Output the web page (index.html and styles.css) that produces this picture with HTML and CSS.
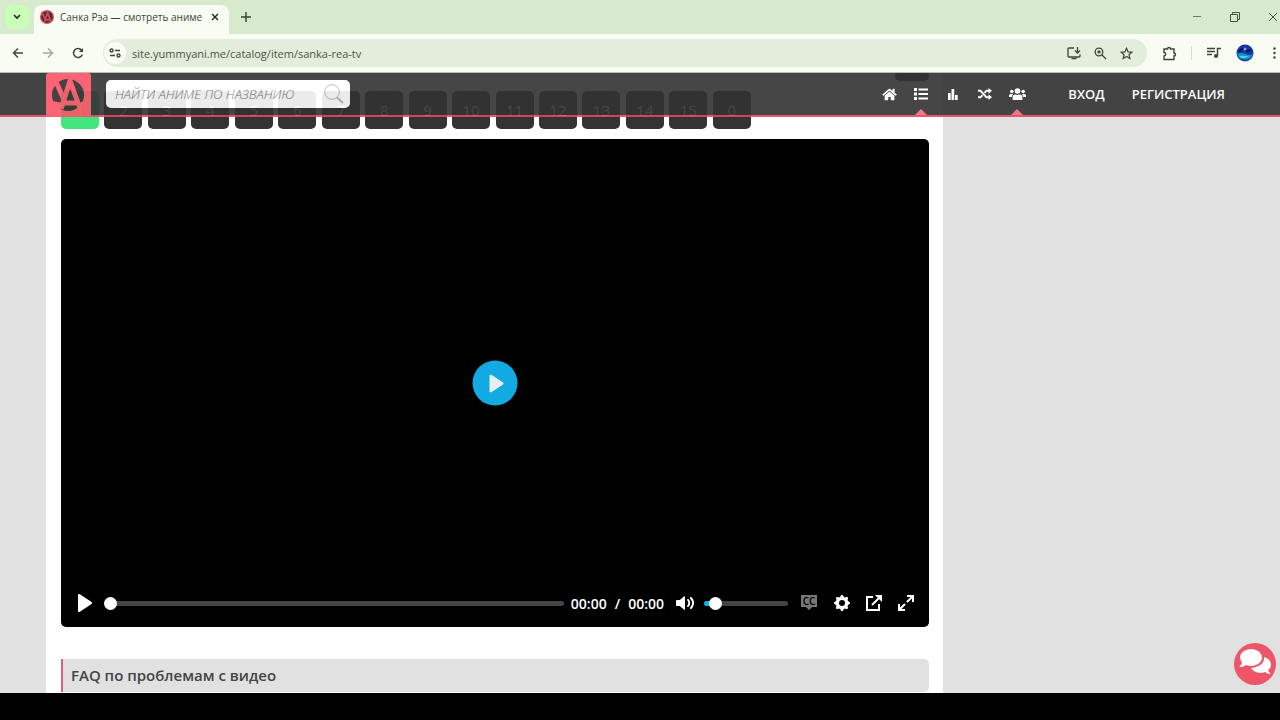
FILE: index.html
```html
<!DOCTYPE html>
<html lang="ru">
<head>
  <meta charset="UTF-8" />
  <meta name="viewport" content="width=device-width, initial-scale=1.0"/>
  <title>Санка Рэа — смотреть аниме</title>
  <link rel="stylesheet" href="styles.css">
</head>
<body>

  <!-- Browser window -->
  <div class="tab-strip">
    <button class="tab-search" aria-label="Search tabs">
      <svg width="8" height="6" viewBox="0 0 8 6"><path d="M1 1l3 3 3-3" fill="none" stroke="#1c2b16" stroke-width="1.6"/></svg>
    </button>
    <div class="tab">
      <svg class="favicon" width="14" height="14" viewBox="0 0 44 44">
        <circle cx="22" cy="22" r="22" fill="#d94a5c"/>
        <circle cx="22" cy="22" r="18" fill="#4a3035"/>
        <path d="M14 38l10-30 10 30M15 31h18M5 5l12 25" fill="none" stroke="#d94a5c" stroke-width="5"/>
      </svg>
      <span class="tab-title">Санка Рэа — смотреть аниме</span>
      <button class="tab-close" aria-label="Close tab">
        <svg width="8" height="8" viewBox="0 0 8 8"><path d="M1 1l6 6M7 1L1 7" stroke="#1e2619" stroke-width="1.4"/></svg>
      </button>
    </div>
    <button class="new-tab" aria-label="New tab">
      <svg width="10" height="10" viewBox="0 0 10 10"><path d="M5 0v10M0 5h10" stroke="#33402c" stroke-width="1.4"/></svg>
    </button>
    <div class="window-controls">
      <button aria-label="Minimize"><svg width="10" height="10" viewBox="0 0 10 10"><path d="M1 4.500h8" stroke="#6d7a66"/></svg></button>
      <button aria-label="Restore"><svg width="10" height="10" viewBox="0 0 10 10"><path d="M.5 2.500h7v7h-7zM2.500 2.500v-2h7v7h-2" fill="none" stroke="#47533f"/></svg></button>
      <button aria-label="Close"><svg width="10" height="10" viewBox="0 0 10 10"><path d="M1 1l8 8M9 1L1 9" stroke="#47533f"/></svg></button>
    </div>
  </div>

  <div class="toolbar">
    <div class="toolbar-nav">
      <button aria-label="Back"><svg width="12" height="12" viewBox="0 0 12 12"><path d="M11 6H2M6 1.500L1.500 6 6 10.500" fill="none" stroke="#3c4636" stroke-width="1.4"/></svg></button>
      <button aria-label="Forward"><svg width="12" height="12" viewBox="0 0 12 12"><path d="M1 6h9M6 1.500l4.500 4.500L6 10.500" fill="none" stroke="#a0a79a" stroke-width="1.4"/></svg></button>
      <button aria-label="Reload"><svg width="12" height="12" viewBox="0 0 12 12"><path d="M10.300 7.500a4.500 4.500 0 1 1-.7-4.300L10.500 4.500" fill="none" stroke="#3c4636" stroke-width="1.500"/><path d="M11 1v4H7z" fill="#3c4636"/></svg></button>
    </div>
    <div class="address-bar">
      <button class="site-info" aria-label="Site information">
        <svg width="12" height="10" viewBox="0 0 12 10" fill="none" stroke="#3c4636" stroke-width="1.400"><circle cx="2.500" cy="2.500" r="1.500"/><path d="M6 2.500h5M1 7.500h5"/><circle cx="9.500" cy="7.500" r="1.500"/></svg>
      </button>
      <input class="url" type="text" aria-label="Address" value="site.yummyani.me/catalog/item/sanka-rea-tv">
      <button aria-label="Install"><svg width="14" height="13" viewBox="0 0 14 13" fill="none" stroke="#3c4636" stroke-width="1.300"><path d="M7 1H2Q1 1 1 2v7q0 1 1 1h10q1 0 1-1V7.500M4.500 11.700h5M10.500 0v5.500M8 3.500L10.500 6 13 3.500"/></svg></button>
      <button aria-label="Zoom"><svg width="13" height="13" viewBox="0 0 13 13" fill="none" stroke="#3c4636" stroke-width="1.300"><circle cx="5" cy="5" r="3.800"/><path d="M8 8l4 4M5 3.200v3.600M3.200 5h3.600"/></svg></button>
      <button aria-label="Bookmark"><svg width="13" height="13" viewBox="0 0 24 24" fill="none" stroke="#3c4636" stroke-width="2.200"><path d="M12 2.500l2.900 6.400 7 .7-5.300 4.600 1.600 6.900-6.200-3.700-6.200 3.700 1.600-6.900L2.100 9.600l7-.7z"/></svg></button>
    </div>
    <button aria-label="Extensions"><svg width="15" height="15" viewBox="0 0 15 15"><path d="M2 3h3.500a1.500 1.500 0 0 1 3 0H12v4a1.500 1.500 0 0 1 0 3v3.500H2V10a1.600 1.600 0 0 0 0-3.500z" fill="none" stroke="#3c4636" stroke-width="1.400"/></svg></button>
    <span class="toolbar-divider"></span>
    <button aria-label="Media"><svg width="14" height="12" viewBox="0 0 14 12"><path d="M0 1.500h8M0 4.500h8M0 7.500h5M10.500 9V1.500H14" fill="none" stroke="#3c4636" stroke-width="1.400"/><circle cx="9" cy="9" r="2" fill="#3c4636"/></svg></button>
    <button class="profile" aria-label="Profile">
      <svg width="18" height="18" viewBox="0 0 18 18"><circle cx="9" cy="9" r="8.500" fill="#1436a8"/><path d="M1 10q4-2 8 0t8 0a8.500 8.500 0 0 1-16 0z" fill="#1596c9"/><path d="M3 12h10l-4 2H5z" fill="#4cd2df"/><path d="M3 8q4-6 8-1l4-1" fill="none" stroke="#071b50" stroke-width="2"/><circle cx="9" cy="5" r="1.500" fill="#8c9bea"/></svg>
    </button>
    <button class="menu" aria-label="Menu"><svg width="3" height="12" viewBox="0 0 3 12" fill="#3c4636"><circle cx="1.500" cy="1.500" r="1.200"/><circle cx="1.500" cy="6" r="1.200"/><circle cx="1.500" cy="10.500" r="1.200"/></svg></button>
  </div>

  <!-- Site -->
  <div class="page">
    <header class="site-header">
      <a class="logo" href="#" aria-label="YummyAnime">
        <svg width="45" height="44" viewBox="0 0 45 44">
          <circle cx="22" cy="22" r="16" fill="#322c2e"/>
          <path d="M15 36l9-28 11 30M17 30h17M7 2l12 27" fill="none" stroke="#fb5467" stroke-width="5"/>
          <path d="M7 28l9 2-4 8zM37 28l-5 3 3 7z" fill="#fb5467"/>
        </svg>
      </a>
      <form class="search">
        <input type="text" aria-label="Поиск" placeholder="НАЙТИ АНИМЕ ПО НАЗВАНИЮ">
        <button type="button" aria-label="Найти"><svg width="20" height="20" viewBox="0 0 20 20" fill="none" stroke="#bbb"><circle cx="8" cy="8" r="7.300"/><path d="M13 13.500l6 5.500" stroke-width="2"/></svg></button>
      </form>
      <nav class="icon-nav">
        <a href="#" aria-label="Главная"><svg width="15" height="13" viewBox="0 0 576 512"><path d="M280.370 148.260L96 300.110V464a16 16 0 0 0 16 16l112.060-.29a16 16 0 0 0 15.920-16V368a16 16 0 0 1 16-16h64a16 16 0 0 1 16 16v95.640a16 16 0 0 0 16 16.050L464 480a16 16 0 0 0 16-16V300L295.670 148.260a12.190 12.190 0 0 0-15.300 0zM571.600 251.470L488 182.560V44.050a12 12 0 0 0-12-12h-56a12 12 0 0 0-12 12v72.610L318.470 43a48 48 0 0 0-61 0L4.340 251.470a12 12 0 0 0-1.600 16.900l25.500 31A12 12 0 0 0 45.150 301l235.220-193.740a12.190 12.190 0 0 1 15.300 0L530.900 301a12 12 0 0 0 16.900-1.600l25.500-31a12 12 0 0 0-1.700-16.930z"/></svg></a>
        <a class="has-menu" href="#" aria-label="Каталог"><svg width="14" height="12" viewBox="0 0 14 12"><path d="M0 0h3v3H0zM0 4.500h3v3H0zM0 9h3v3H0zM4.500.5H14v2H4.500zM4.500 5H14v2H4.500zM4.500 9.500H14v2H4.500z"/></svg></a>
        <a href="#" aria-label="Топ"><svg width="10" height="11" viewBox="0 0 10 11"><path d="M0 4h2.700v7H0zM3.500 0h2.700v11H3.500zM7 6h2.700v5H7z"/></svg></a>
        <a href="#" aria-label="Случайное"><svg width="14" height="12" viewBox="0 0 14 12"><path d="M0 2.700h2.500L8.500 9.300H11M0 9.300h2.500l2-2.200M6.500 4.900l2-2.200H11" fill="none" stroke="#fff" stroke-width="2"/><path d="M10.500 0L14 2.700l-3.500 3zM10.500 6.300l3.500 3-3.500 2.700z"/></svg></a>
        <a class="has-menu" href="#" aria-label="Сообщество"><svg width="17" height="12" viewBox="0 0 17 12"><circle cx="8.500" cy="3" r="2.800"/><circle cx="2.800" cy="3.500" r="1.800"/><circle cx="14.200" cy="3.500" r="1.800"/><path d="M3.600 12V9.500q0-3 2.800-3 2 .8 4.200 0 2.800 0 2.800 3V12zM0 9V7.500Q0 6 1.500 6h2.700Q3 7 2.900 9zM17 9V7.500Q17 6 15.500 6h-2.700q1.200 1 1.300 3z"/></svg></a>
      </nav>
      <nav class="user-nav">
        <a href="#">ВХОД</a>
        <a href="#">РЕГИСТРАЦИЯ</a>
      </nav>
    </header>

    <main class="content">
      <div class="filters"><span class="filter"></span></div>

      <div class="episodes">
        <button class="episode active">1</button>
        <button class="episode">2</button>
        <button class="episode">3</button>
        <button class="episode">4</button>
        <button class="episode">5</button>
        <button class="episode">6</button>
        <button class="episode">7</button>
        <button class="episode">8</button>
        <button class="episode">9</button>
        <button class="episode">10</button>
        <button class="episode">11</button>
        <button class="episode">12</button>
        <button class="episode">13</button>
        <button class="episode">14</button>
        <button class="episode">15</button>
        <button class="episode">0</button>
      </div>

      <div class="player">
        <button class="big-play" aria-label="Воспроизвести"><svg width="18" height="18" viewBox="0 0 18 18"><path d="M15.562 8.100L3.870.225c-.818-.562-1.870 0-1.870.9v15.750c0 .9 1.052 1.462 1.870.9L15.563 9.900c.584-.45.584-1.350 0-1.800z"/></svg></button>
        <div class="controls">
          <button aria-label="Воспроизвести"><svg width="18" height="18" viewBox="0 0 18 18"><path d="M15.562 8.100L3.870.225c-.818-.562-1.870 0-1.870.9v15.750c0 .9 1.052 1.462 1.870.9L15.563 9.900c.584-.45.584-1.350 0-1.800z"/></svg></button>
          <input class="seek" type="range" min="0" max="100" value="0" aria-label="Перемотка" style="--fill: 0%">
          <div class="time"><span>00:00</span><span>/</span><span>00:00</span></div>
          <button aria-label="Звук"><svg width="18" height="18" viewBox="0 0 18 18"><path d="M15.600 3.300c-.4-.4-1-.4-1.400 0-.4.4-.4 1 0 1.400C15.400 5.900 16 7.400 16 9c0 1.600-.6 3.100-1.800 4.300-.4.4-.4 1 0 1.400.2.2.5.3.7.3.3 0 .5-.1.7-.3C17.100 13.200 18 11.200 18 9s-.9-4.200-2.400-5.700z"/><path d="M11.282 5.282a.909.909 0 000 1.316c.735.735.995 1.458.995 2.402 0 .936-.425 1.917-.995 2.487a.909.909 0 000 1.316c.145.145.636.262 1.018.156a.725.725 0 00.298-.156C13.773 11.733 14.130 10.160 14.130 9c0-.17-.002-.34-.011-.51-.053-.992-.319-2.005-1.522-3.208a.909.909 0 00-1.316 0zm-7.496.726H.875C.33 6.008 0 6.310 0 6.810v4.354c0 .5.33.871.875.871h2.910l4.142 3.500c.397.4 1.073.1 1.073-.4V2.900c0-.6-.676-.9-1.073-.5z"/></svg></button>
          <input class="volume" type="range" min="0" max="100" value="7" aria-label="Громкость" style="--fill: 10%">
          <div class="player-menu">
            <button class="captions" aria-label="Субтитры"><svg width="18" height="16" viewBox="0 0 18 16"><path d="M1 0h16v12h-5l-3 3-3-3H1z"/><text x="9" y="10" text-anchor="middle">CC</text></svg></button>
            <button aria-label="Настройки"><svg width="16" height="16" viewBox="1 1 16 16"><path d="M16.135 7.784a2 2 0 01-1.230-2.969c.322-.536.225-.998-.094-1.316l-.31-.31c-.318-.318-.78-.415-1.316-.094a2 2 0 01-2.969-1.230C10.065 1.258 9.669 1 9.219 1h-.438c-.45 0-.845.258-.997.865a2 2 0 01-2.969 1.230c-.536-.322-.999-.225-1.317.093l-.31.31c-.318.318-.415.781-.093 1.317a2 2 0 01-1.230 2.969C1.260 7.935 1 8.330 1 8.781v.438c0 .45.258.845.865.997a2 2 0 011.230 2.969c-.322.536-.225.998.094 1.316l.31.31c.319.319.782.415 1.316.094a2 2 0 012.969 1.230c.151.607.547.865.997.865h.438c.45 0 .845-.258.997-.865a2 2 0 012.969-1.230c.535.321.997.225 1.316-.094l.31-.31c.318-.318.415-.781.094-1.316a2 2 0 011.230-2.969c.607-.151.865-.547.865-.997v-.438c0-.451-.26-.846-.865-.997zM9 12a3 3 0 110-6 3 3 0 010 6z"/></svg></button>
            <button aria-label="Картинка в картинке"><svg width="16" height="16" viewBox="0 0 16 16"><path d="M7 2H1v13h12V9M6 10l7-7" fill="none" stroke="#fff" stroke-width="2"/><path d="M9 0h7v7z"/></svg></button>
            <button aria-label="Полный экран"><svg width="16" height="16" viewBox="0 0 16 16"><path d="M9 1h6v6M1 9v6h6M15 1L9 7M1 15l6-6" fill="none" stroke="#fff" stroke-width="2"/></svg></button>
          </div>
        </div>
      </div>

      <h2 class="faq">FAQ по проблемам с видео</h2>
    </main>

    <button class="chat" aria-label="Чат">
      <svg width="42" height="42" viewBox="0 0 42 42">
        <path d="M36 30q1 0 0 1-3 0-5-2-9 3-14-4 14-2 13-11 7 2 7 8 0 3-3 5 1 2 2 3z" fill="#fff"/>
        <path d="M17 6c6 0 11 4 11 8.500S23 23 17 23q-3 0-5-1-2 2-6 2-1 0 0-1 2-2 2-4-2-2-2-4.500C6 10 11 6 17 6z" fill="#fff" stroke="#ef5568" stroke-width="1.500" paint-order="stroke"/>
      </svg>
    </button>
  </div>

  <div class="taskbar"></div>

</body>
</html>
```
FILE: styles.css
```css
* {
  box-sizing: border-box;
}

body {
  margin: 0;
  height: 100vh;
  display: flex;
  flex-direction: column;
  overflow: hidden;
  font-family: "Open Sans", sans-serif;
  background: #e1e1e1;
  color: #333;
}

button {
  display: flex;
  align-items: center;
  justify-content: center;
  padding: 0;
  border: none;
  background: none;
  font-family: inherit;
  cursor: pointer;
}

svg {
  display: block;
  flex-shrink: 0;
}

/* Browser tabs */
.tab-strip {
  display: flex;
  align-items: flex-end;
  flex-shrink: 0;
  height: 34px;
  padding-left: 5px;
  background: #d8eacd;
}

.tab-search {
  width: 24px;
  height: 24px;
  margin: 0 5px 5px 0;
  border-radius: 7px;
  background: #c9ffb6;
}

.tab {
  display: flex;
  align-items: center;
  width: 195px;
  height: 29px;
  padding: 0 9px 5px 6px;
  border-radius: 8px 8px 0 0;
  background: #f8fcf2;
}

.tab-title {
  flex: 1;
  margin-left: 6px;
  white-space: nowrap;
  font-size: 10px;
  color: #3a4434;
}

.tab-close {
  width: 10px;
  height: 16px;
}

.new-tab {
  width: 34px;
  height: 34px;
}

.window-controls {
  display: flex;
  margin-left: auto;
  margin-right: -12px;
}

.window-controls button {
  width: 38px;
  height: 34px;
}

/* Browser toolbar */
.toolbar {
  display: flex;
  align-items: center;
  gap: 10px;
  flex-shrink: 0;
  height: 39px;
  padding-left: 12px;
  border-bottom: 1px solid #b9bdb4;
  background: #f8fcf2;
}

.toolbar > button {
  width: 24px;
  height: 28px;
}

.toolbar-nav {
  display: flex;
  gap: 18px;
  width: 81px;
}

.address-bar {
  flex: 1;
  display: flex;
  align-items: center;
  gap: 13px;
  height: 28px;
  padding: 0 14px 0 1px;
  border-radius: 14px;
  background: #e4eddc;
}

.site-info {
  width: 22px;
  height: 22px;
  border-radius: 50%;
  background: #f8fcf2;
}

.url {
  flex: 1;
  margin-left: -7px;
  padding: 0;
  border: none;
  outline: none;
  background: none;
  font-family: inherit;
  font-size: 11px;
  color: #4a5444;
}

.toolbar-divider {
  width: 1px;
  height: 14px;
  background: #c4ecb4;
}

.toolbar > .profile {
  width: 18px;
}

.toolbar > .menu {
  width: 16px;
  justify-content: flex-end;
  padding-right: 4px;
}

/* Site */
.page {
  position: relative;
  flex: 1;
  min-height: 0;
  display: grid;
  grid-template-columns: 46px minmax(0, 1fr) 337px;
  overflow: hidden;
}

.site-header {
  position: absolute;
  top: 0;
  left: 0;
  right: 0;
  z-index: 10;
  display: flex;
  align-items: center;
  height: 44px;
  padding: 0 55px 0 46px;
  border-bottom: 2px solid #e04a5c;
  background: #323232;
  opacity: 0.9;
}

.logo {
  align-self: flex-start;
  height: 44px;
  border-radius: 3px;
  background: #fb5467;
}

.search {
  display: flex;
  align-items: center;
  width: 244px;
  height: 28px;
  margin-left: 15px;
  padding: 0 6px 0 9px;
  border-radius: 5px;
  background: #fff;
}

.search input {
  flex: 1;
  min-width: 0;
  padding: 0;
  border: none;
  outline: none;
  background: none;
  font-family: inherit;
  font-size: 13px;
  font-style: italic;
}

.search input::placeholder {
  color: #777;
  font-weight: 300;
}

.icon-nav {
  display: flex;
  margin-left: auto;
}

.icon-nav a {
  position: relative;
  display: flex;
  align-items: center;
  justify-content: center;
  width: 32px;
  height: 42px;
  fill: #fff;
}

.has-menu::after {
  content: "";
  position: absolute;
  bottom: 0;
  border: 6px solid transparent;
  border-top: none;
  border-bottom-color: #fb6677;
}

.user-nav {
  display: flex;
  gap: 27px;
  margin-left: 35px;
}

.user-nav a {
  color: #fff;
  font-size: 13px;
  font-weight: 600;
  text-decoration: none;
}

.content {
  grid-column: 2;
  padding: 0 14px 0 15px;
  background: #fff;
}

.filters {
  display: flex;
  justify-content: flex-end;
}

.filter {
  width: 34px;
  height: 8px;
  border-radius: 0 0 5px 5px;
  background: #333;
}

.episodes {
  display: flex;
  justify-content: space-between;
  max-width: 690px;
  margin: 10px 0;
}

.episode {
  width: 38px;
  height: 38px;
  border-radius: 5px;
  background: #333;
  color: #fff;
  font-size: 15px;
}

.episode.active {
  background: #43e57e;
}

/* Player */
.player {
  display: flex;
  flex-direction: column;
  align-items: center;
  justify-content: flex-end;
  position: relative;
  aspect-ratio: 16 / 9;
  border-radius: 5px;
  background: #000;
  fill: #fff;
}

.big-play {
  position: absolute;
  top: 50%;
  left: 50%;
  width: 45px;
  height: 45px;
  padding-left: 2px;
  transform: translate(-50%, -50%);
  border-radius: 50%;
  background: #12aae2;
  fill: #e6eef2;
}

.controls {
  display: flex;
  align-items: center;
  width: 100%;
  height: 48px;
  padding: 0 15px;
}

.controls input {
  height: 14px;
  margin: 0;
  appearance: none;
  background: none;
}

.controls input::-webkit-slider-runnable-track {
  height: 5px;
  border-radius: 3px;
  background: linear-gradient(to right, #12b2e6 var(--fill), #444 var(--fill));
}

.controls input::-webkit-slider-thumb {
  appearance: none;
  width: 13px;
  height: 13px;
  margin-top: -4px;
  border-radius: 50%;
  background: #fff;
}

.controls .seek {
  flex: 1;
  min-width: 0;
  margin-left: 10px;
}

.controls .volume {
  width: 84px;
  margin-left: 10px;
}

.time {
  display: flex;
  gap: 8px;
  margin: 0 12px 0 7px;
  color: #fff;
  font-size: 14px;
  font-weight: 600;
}

.player-menu {
  display: flex;
  gap: 16px;
  margin-left: 12px;
}

.captions {
  fill: #777;
}

.captions text {
  fill: #000;
  font-size: 10px;
  font-weight: 600;
}

.faq {
  margin: 32px 0 0;
  padding: 0 8px;
  border-left: 2px solid #e0607a;
  border-radius: 0 5px 5px 0;
  background: #e1e1e1;
  color: #444;
  font-size: 15px;
  font-weight: 600;
  line-height: 33px;
}

.chat {
  position: absolute;
  right: 4px;
  bottom: 8px;
  width: 42px;
  height: 42px;
  border-radius: 50%;
  background: #ef5568;
}

.taskbar {
  flex-shrink: 0;
  height: 27px;
  background: #000;
}
```
